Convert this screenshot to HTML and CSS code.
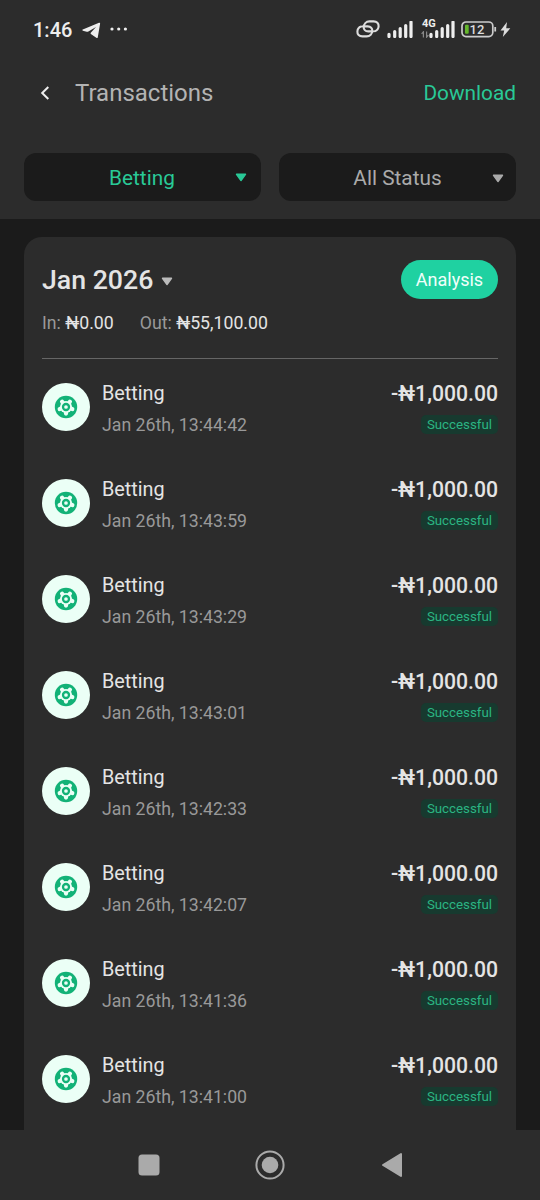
FILE: index.html
```html
<!DOCTYPE html>
<html lang="en">
<head>
<meta charset="utf-8">
<title>Transactions</title>
<link rel="stylesheet" href="styles.css">
</head>
<body>
<svg width="0" height="0" class="defs" aria-hidden="true">
  <symbol id="ball" viewBox="0 0 24 24">
    <circle cx="12" cy="12" r="11.2" fill="#12b277"/>
    <path d="M12 12V18.6M12 12 5.7 14M12 12 8.1 6.7M12 12 15.9 6.7M12 12 18.3 14" stroke="#ebfff6" stroke-width="4.2" stroke-linecap="round"/>
    <circle cx="12" cy="12" r="6" fill="#ebfff6"/>
    <circle cx="12" cy="12" r="3" fill="#ebfff6" stroke="#12b277" stroke-width="2.3"/>
  </symbol>
  <symbol id="caret" viewBox="0 0 12 9">
    <path d="M1.5 1.3h9L6 7.5Z" fill="currentColor" stroke="currentColor" stroke-width="1.4" stroke-linejoin="round"/>
  </symbol>
  <symbol id="signal" viewBox="0 0 26 17">
    <path d="M2 16.2v-2.2M7.7 16.2v-5M13.2 16.2v-8M18.7 16.2v-11M24 16.2v-14.4" stroke="#eee" stroke-width="3.2" stroke-linecap="round" transform="translate(0 -.7)"/>
  </symbol>
</svg>
<div class="screen">
  <header class="top">
    <div class="status">
      <span class="clock">1:46</span>
      <svg class="plane" width="19" height="17" viewBox="0 0 19 17"><path d="M.8 7.5 17 .8q1.3-.4 1.1.9L15.8 15.2q-.3 1.4-1.5.6L9.2 12.3Q8 11.4 9 10.4L14 5 6.4 9.6q-.8.4-1.7.2L.9 8.7Q-.3 8.2.8 7.5Z" fill="#eee"/></svg>
      <svg class="dots" width="18" height="4" viewBox="0 0 18 4"><g fill="#eee"><circle cx="2" cy="2" r="1.6"/><circle cx="8.7" cy="2" r="1.6"/><circle cx="15.4" cy="2" r="1.6"/></g></svg>
      <svg class="link" width="24" height="18" viewBox="0 0 24 18"><g fill="none" stroke="#ddd" stroke-width="2.1" stroke-linecap="round"><path d="M17 11.4H12.2C9.2 11.4 7.6 9.4 7.7 7.2 7.8 4 10 1.4 13.4 1.4h4.2c3.3 0 5.2 2.2 5 4.8-.1 2.2-1.5 4.3-3.8 5"/><path d="M7 6.4h4.8c3 0 4.6 2 4.5 4.2-.1 3.2-2.3 5.8-5.7 5.8H6.4c-3.3 0-5.2-2.2-5-4.8.1-2.2 1.5-4.3 3.8-5"/></g></svg>
      <svg class="signal" width="26" height="17"><use href="#signal"/></svg>
      <span class="mobile">
        <span class="net">4G</span>
        <svg class="arrows" width="8" height="7" viewBox="0 0 8 7"><path d="M2.4 6.5V.8M.6 2.8 2.4.8V3M5.6.5v5.7M7.4 4.2 5.6 6.2V4" fill="none" stroke="#888" stroke-width="1.2"/></svg>
        <svg width="26" height="17"><use href="#signal"/></svg>
      </span>
      <svg class="battery" width="36" height="17" viewBox="0 0 36 17"><rect x="1" y="1" width="30.8" height="14.6" rx="4" fill="none" stroke="#ccc" stroke-width="1.7"/><path d="M34.2 6v4.5" stroke="#ccc" stroke-width="1.8"/><rect x="4" y="3.8" width="3.7" height="9" rx="1" fill="#65b72c"/><text x="16" y="12.9" text-anchor="middle" class="level">12</text></svg>
      <svg class="bolt" width="11" height="15" viewBox="0 0 11 15"><path d="M7 0 .5 8.5h3.7L2.8 15 10.3 6.3H6.2Z" fill="#ddd"/></svg>
    </div>
    <div class="titlebar">
      <svg class="back" width="10" height="16" viewBox="0 0 10 16"><path d="M8.3 2 2.2 8l6.1 6" fill="none" stroke="#eee" stroke-width="2"/></svg>
      <h1>Transactions</h1>
      <span class="download">Download</span>
    </div>
    <div class="filters">
      <div class="filter active"><span>Betting</span><svg width="12" height="9"><use href="#caret"/></svg></div>
      <div class="filter"><span>All Status</span><svg width="12" height="9"><use href="#caret"/></svg></div>
    </div>
  </header>
  <main class="card">
    <div class="summary">
      <div class="month"><h2>Jan 2026</h2><svg width="12" height="9"><use href="#caret"/></svg><span class="analysis">Analysis</span></div>
      <div class="totals"><span>In: <b>₦0.00</b></span><span>Out: <b>₦55,100.00</b></span></div>
    </div>
    <div class="row"><span class="icon"><svg width="24" height="24"><use href="#ball"/></svg></span><div class="info"><p class="name">Betting</p><p class="date">Jan 26th, 13:44:42</p></div><div class="right"><p class="amount">-₦1,000.00</p><span class="tag">Successful</span></div></div>
    <div class="row"><span class="icon"><svg width="24" height="24"><use href="#ball"/></svg></span><div class="info"><p class="name">Betting</p><p class="date">Jan 26th, 13:43:59</p></div><div class="right"><p class="amount">-₦1,000.00</p><span class="tag">Successful</span></div></div>
    <div class="row"><span class="icon"><svg width="24" height="24"><use href="#ball"/></svg></span><div class="info"><p class="name">Betting</p><p class="date">Jan 26th, 13:43:29</p></div><div class="right"><p class="amount">-₦1,000.00</p><span class="tag">Successful</span></div></div>
    <div class="row"><span class="icon"><svg width="24" height="24"><use href="#ball"/></svg></span><div class="info"><p class="name">Betting</p><p class="date">Jan 26th, 13:43:01</p></div><div class="right"><p class="amount">-₦1,000.00</p><span class="tag">Successful</span></div></div>
    <div class="row"><span class="icon"><svg width="24" height="24"><use href="#ball"/></svg></span><div class="info"><p class="name">Betting</p><p class="date">Jan 26th, 13:42:33</p></div><div class="right"><p class="amount">-₦1,000.00</p><span class="tag">Successful</span></div></div>
    <div class="row"><span class="icon"><svg width="24" height="24"><use href="#ball"/></svg></span><div class="info"><p class="name">Betting</p><p class="date">Jan 26th, 13:42:07</p></div><div class="right"><p class="amount">-₦1,000.00</p><span class="tag">Successful</span></div></div>
    <div class="row"><span class="icon"><svg width="24" height="24"><use href="#ball"/></svg></span><div class="info"><p class="name">Betting</p><p class="date">Jan 26th, 13:41:36</p></div><div class="right"><p class="amount">-₦1,000.00</p><span class="tag">Successful</span></div></div>
    <div class="row"><span class="icon"><svg width="24" height="24"><use href="#ball"/></svg></span><div class="info"><p class="name">Betting</p><p class="date">Jan 26th, 13:41:00</p></div><div class="right"><p class="amount">-₦1,000.00</p><span class="tag">Successful</span></div></div>
  </main>
  <nav class="nav">
    <svg width="22" height="22" viewBox="0 0 22 22"><rect x=".5" y=".5" width="21" height="21" rx="3.5" fill="#aaa"/></svg>
    <svg width="30" height="30" viewBox="0 0 30 30"><circle cx="15" cy="15" r="13.6" fill="none" stroke="#aaa" stroke-width="2"/><circle cx="15" cy="15" r="8.3" fill="#aaa"/></svg>
    <svg width="22" height="26" viewBox="0 0 22 26"><path d="M2 13 20 2v22Z" fill="#aaa" stroke="#aaa" stroke-width="2" stroke-linejoin="round"/></svg>
  </nav>
</div>
</body>
</html>
```
FILE: styles.css
```css
* { box-sizing: border-box; margin: 0; padding: 0; }
body { background: #1b1b1b; font-family: Roboto, "Liberation Sans", sans-serif; color: #e4e4e4; }
svg { display: block; flex: none; }
.defs { position: absolute; }
.screen { width: 540px; height: 1200px; overflow: hidden; display: flex; flex-direction: column; }
.top { flex: none; height: 219px; background: #2c2c2c; }
.status { height: 58px; padding: 0 29px 0 33px; display: flex; align-items: center; }
.clock { font-size: 20px; font-weight: 500; color: #eee; width: 49px; padding-top: 2px; }
.plane { margin-right: 9px; margin-top: 2px; }
.dots { margin-right: auto; }
.link { margin-right: 7px; }
.signal { margin: 1px 8px 0 0; }
.mobile { position: relative; padding-left: 8px; margin: 1px 6px 0 0; }
.net { position: absolute; left: 1px; top: -4px; font-size: 11px; line-height: 13px; font-weight: 700; color: #eee; }
.arrows { position: absolute; left: 0; bottom: 0; }
.battery { margin-right: 3px; }
.level { font-size: 13px; font-weight: 500; fill: #ddd; }
.bolt { margin-top: 1px; }
.titlebar { height: 68px; padding: 2px 24px 0 39px; display: flex; align-items: center; }
.back { margin: 0 25px 0 1px; }
h1 { font-size: 24px; font-weight: 400; color: #b3b3b3; }
.download { margin-left: auto; font-size: 20.8px; color: #29c997; }
.filters { margin-top: 27px; padding: 0 24px; display: grid; grid-template-columns: 1fr 1fr; gap: 18px; }
.filter { height: 48px; border-radius: 12px; background: #1b1b1b; display: flex; align-items: center; padding-right: 12px; font-size: 20.8px; color: #aaa; }
.filter span { flex: 1; text-align: center; padding: 2px 0 0 24px; }
.filter svg { margin-top: 2px; }
.filter.active { color: #29c997; padding-right: 14px; }
.filter.active span { padding-left: 25px; }
.filter.active svg { margin-top: 0; }
.card { flex: 1; min-height: 0; overflow: hidden; margin: 18px 24px 0; padding: 0 18px; background: #2c2c2c; border-radius: 18px 18px 0 0; }
.summary { height: 122px; padding-top: 23px; border-bottom: 1px solid #666; }
.month { height: 39px; display: flex; align-items: center; }
h2 { font-size: 26.7px; font-weight: 500; color: #e4e4e4; padding-top: 1px; }
.month svg { margin: 4px 0 0 8px; color: #bbb; }
.analysis { margin-left: auto; width: 97px; height: 39px; line-height: 40px; border-radius: 20px; background: #1fd1a1; color: #f0fffa; font-size: 18px; text-align: center; }
.totals { margin-top: 12px; display: flex; gap: 26px; font-size: 17.7px; line-height: 24px; color: #999; }
.totals b { font-weight: 400; color: #e4e4e4; }
.row { height: 96px; display: flex; padding-top: 24px; }
.icon { width: 48px; height: 48px; border-radius: 50%; background: #ebfff6; display: flex; align-items: center; justify-content: center; margin-right: 12px; }
.info { flex: 1; }
.name { font-size: 19.8px; line-height: 22px; }
.date { margin-top: 9px; font-size: 17.7px; line-height: 22px; color: #999; }
.right { display: flex; flex-direction: column; align-items: flex-end; }
.amount { font-size: 21.2px; line-height: 22px; font-weight: 500; }
.tag { margin-top: 10px; height: 19px; line-height: 20px; padding: 0 6px; border-radius: 5px; background: #173a2f; color: #2bb583; font-size: 13.3px; }
.nav { flex: none; height: 70px; background: #2c2c2c; display: flex; align-items: center; padding-left: 138px; }
.nav svg:nth-child(2) { margin: 0 96px 0 95px; }
```
